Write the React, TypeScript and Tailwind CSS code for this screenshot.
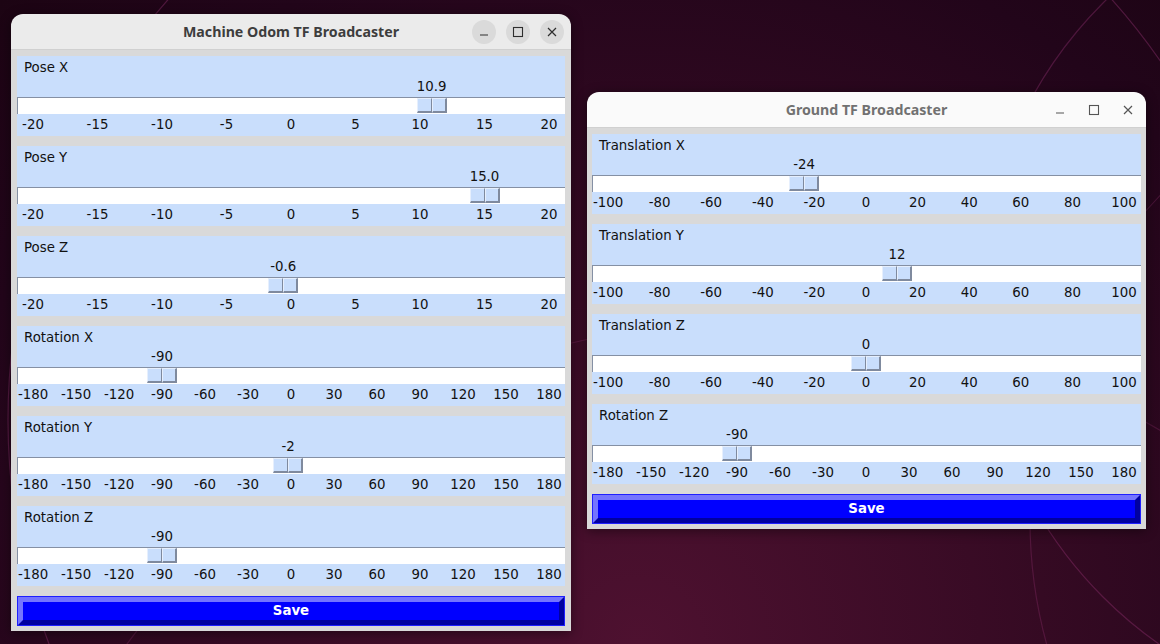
import React from "react";

type SliderProps = {
  label: string;
  value: number;
  display: string;
  min: number;
  max: number;
  step: number;
};

const TROUGH_W = 548;

function pos(v: number, min: number, max: number) {
  return 16 + ((v - min) / (max - min)) * (TROUGH_W - 32);
}

function Slider({ label, value, display, min, max, step }: SliderProps) {
  const ticks: number[] = [];
  for (let t = min; t <= max + 1e-9; t += step) ticks.push(t);
  const c = pos(value, min, max);
  return (
    <div className="h-[80px] w-full bg-[#c9defc] font-['DejaVu_Sans',sans-serif] text-[13.33px] text-[#111]">
      <div className="h-[22px] pl-[7px] pt-[1px] leading-[22px]">{label}</div>
      <div className="relative h-[16px] leading-[16px]">
        <span className="absolute top-[1px] -translate-x-1/2 whitespace-nowrap" style={{ left: c }}>
          {display}
        </span>
      </div>
      <div className="h-[3px]" />
      <div className="relative h-[17px] border-l border-t border-[#8590a4] bg-white">
        <div className="absolute top-[0px] flex h-[15px] w-[30px] -translate-x-1/2" style={{ left: c - 1 }}>
          <div className="h-full w-[15px] border-b-2 border-l border-r border-t border-b-[#7f8a9e] border-l-[#e6effd] border-r-[#7f8a9e] border-t-[#e6effd] bg-[#c9defc]" />
          <div className="h-full w-[15px] border-b-2 border-l border-r-2 border-t border-b-[#7f8a9e] border-l-[#e6effd] border-r-[#7f8a9e] border-t-[#e6effd] bg-[#c9defc]" />
        </div>
      </div>
      <div className="relative h-[20px] leading-[20px]">
        {ticks.map((t) => (
          <span
            key={t}
            className="absolute top-[1px] -translate-x-1/2 whitespace-nowrap"
            style={{ left: pos(t, min, max) }}
          >
            {t}
          </span>
        ))}
      </div>
    </div>
  );
}

function SaveButton() {
  return (
    <div className="h-[30px] border border-[#1f1fff]">
      <div className="flex h-full items-center justify-center border-[5px] border-b-[#0000a0] border-l-[#7474ff] border-r-[#0000a0] border-t-[#7474ff] bg-[#0000ff] font-['DejaVu_Sans',sans-serif] text-[13.33px] font-bold text-white">
        Save
      </div>
    </div>
  );
}

function MinIcon({ color }: { color: string }) {
  return (
    <svg width="12" height="12" viewBox="0 0 12 12">
      <line x1="2" y1="9" x2="10" y2="9" stroke={color} strokeWidth="1.2" />
    </svg>
  );
}
function MaxIcon({ color }: { color: string }) {
  return (
    <svg width="12" height="12" viewBox="0 0 12 12">
      <rect x="1.5" y="1.5" width="9" height="9" fill="none" stroke={color} strokeWidth="1.1" />
    </svg>
  );
}
function CloseIcon({ color }: { color: string }) {
  return (
    <svg width="12" height="12" viewBox="0 0 12 12">
      <path d="M2 2 L10 10 M10 2 L2 10" stroke={color} strokeWidth="1.2" />
    </svg>
  );
}

function Window({
  title,
  active,
  children,
  pad,
}: {
  title: string;
  active: boolean;
  children: React.ReactNode;
  pad: string;
}) {
  const ic = active ? "#2e2e2e" : "#555555";
  return (
    <div className="overflow-hidden rounded-t-[12px] shadow-[0_2px_12px_rgba(0,0,0,0.45)]">
      <div
        className={
          "relative flex h-[36px] items-center justify-center border-b border-[#d0d0d0] font-['Noto_Sans',sans-serif] text-[14.2px] font-bold " +
          (active ? "bg-[#ebebeb] text-[#3d3d3d]" : "bg-[#fafafa] text-[#717171]")
        }
      >
        <span className="pt-[1px]">{title}</span>
        {active ? (
          <div className="absolute right-[7px] top-[6px] flex gap-[10px]">
            <div className="flex h-[24px] w-[24px] items-center justify-center rounded-full bg-[#dadada]">
              <MinIcon color={ic} />
            </div>
            <div className="flex h-[24px] w-[24px] items-center justify-center rounded-full bg-[#dadada]">
              <MaxIcon color={ic} />
            </div>
            <div className="flex h-[24px] w-[24px] items-center justify-center rounded-full bg-[#dadada]">
              <CloseIcon color={ic} />
            </div>
          </div>
        ) : (
          <div className="absolute right-[6px] top-[6px] flex gap-[10px]">
            <div className="flex h-[24px] w-[24px] items-center justify-center">
              <MinIcon color={ic} />
            </div>
            <div className="flex h-[24px] w-[24px] items-center justify-center">
              <MaxIcon color={ic} />
            </div>
            <div className="flex h-[24px] w-[24px] items-center justify-center">
              <CloseIcon color={ic} />
            </div>
          </div>
        )}
      </div>
      <div className={"flex flex-col gap-[10px] bg-[#d9d9d9] pb-[5px] pt-[6px] " + pad}>{children}</div>
    </div>
  );
}

export default function App() {
  return (
    <div className="relative h-[644px] w-[1160px] overflow-hidden bg-[radial-gradient(ellipse_at_55%_100%,#4e1130_0%,#350a23_45%,#22051a_80%,#1c0413_100%)]">
      <svg className="absolute inset-0" width="1160" height="644" viewBox="0 0 1160 644">
        <circle cx="640" cy="420" r="632" fill="none" stroke="rgba(190,70,150,0.3)" strokeWidth="1.2" />
        <circle cx="1400" cy="300" r="420" fill="none" stroke="rgba(190,70,150,0.28)" strokeWidth="1.2" />
        <circle cx="1500" cy="520" r="470" fill="none" stroke="rgba(190,70,150,0.22)" strokeWidth="1.2" />
        <circle cx="760" cy="1100" r="780" fill="none" stroke="rgba(190,70,150,0.2)" strokeWidth="1.2" />
      </svg>

      <div className="absolute left-[11px] top-[14px] w-[560px]">
        <Window title="Machine Odom TF Broadcaster" active pad="px-[6px]">
          <Slider label="Pose X" value={10.9} display="10.9" min={-20} max={20} step={5} />
          <Slider label="Pose Y" value={15.0} display="15.0" min={-20} max={20} step={5} />
          <Slider label="Pose Z" value={-0.6} display="-0.6" min={-20} max={20} step={5} />
          <Slider label="Rotation X" value={-90} display="-90" min={-180} max={180} step={30} />
          <Slider label="Rotation Y" value={-2} display="-2" min={-180} max={180} step={30} />
          <Slider label="Rotation Z" value={-90} display="-90" min={-180} max={180} step={30} />
          <SaveButton />
        </Window>
      </div>

      <div className="absolute left-[587px] top-[92px] w-[559px]">
        <Window title="Ground TF Broadcaster" active={false} pad="px-[5px]">
          <Slider label="Translation X" value={-24} display="-24" min={-100} max={100} step={20} />
          <Slider label="Translation Y" value={12} display="12" min={-100} max={100} step={20} />
          <Slider label="Translation Z" value={0} display="0" min={-100} max={100} step={20} />
          <Slider label="Rotation Z" value={-90} display="-90" min={-180} max={180} step={30} />
          <SaveButton />
        </Window>
      </div>
    </div>
  );
}
